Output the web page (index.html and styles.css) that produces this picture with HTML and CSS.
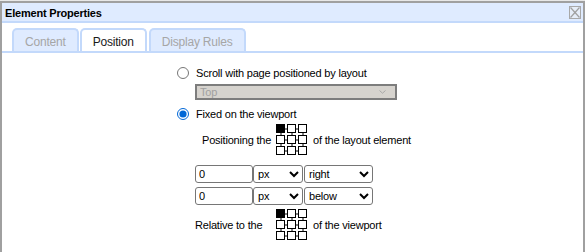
FILE: index.html
```html
<!DOCTYPE html>
<html lang="en">
<head>
    <meta charset="UTF-8">
    <meta name="viewport" content="width=device-width, initial-scale=1.0">
    <title>Element Properties</title>
    <link rel="stylesheet" href="styles.css">
</head>
<body>
    <div class="backdrop"></div>
    <div class="dialog">
        <div class="titlebar">
            <span class="title">Element Properties</span>
            <span class="close-btn">
                <svg width="10" height="11" viewBox="0 0 10 11">
                    <line x1="0.5" y1="0.5" x2="9.5" y2="10.5" stroke="#a0a0a0" stroke-width="1.2"/>
                    <line x1="9.5" y1="0.5" x2="0.5" y2="10.5" stroke="#a0a0a0" stroke-width="1.2"/>
                </svg>
            </span>
        </div>

        <div class="tabs">
            <div class="tab">Content</div>
            <div class="tab active">Position</div>
            <div class="tab">Display Rules</div>
        </div>

        <div class="panel">
            <label class="radio-row">
                <input type="radio" name="mode">
                <span>Scroll with page positioned by layout</span>
            </label>
            <div class="indent">
                <div class="layout-select">
                    <span>Top</span>
                    <svg width="7" height="4" viewBox="0 0 7 4">
                        <polyline points="0.5,0.5 3.5,3.2 6.5,0.5" fill="none" stroke="#a8a8a8" stroke-width="1"/>
                    </svg>
                </div>
            </div>
            <label class="radio-row">
                <input type="radio" name="mode" checked>
                <span>Fixed on the viewport</span>
            </label>

            <div class="indent anchor-row first">
                <span class="anchor-label">Positioning the</span>
                <svg class="grid" width="32" height="32" viewBox="0 0 32 32">
                    <g stroke="#000" stroke-width="1" fill="#fff">
                        <line x1="9" y1="5" x2="23" y2="5"/>
                        <line x1="9" y1="16" x2="23" y2="16"/>
                        <line x1="9" y1="27" x2="23" y2="27"/>
                        <line x1="5" y1="9" x2="5" y2="23"/>
                        <line x1="16" y1="9" x2="16" y2="23"/>
                        <line x1="27" y1="9" x2="27" y2="23"/>
                        <rect x="0.5" y="0.5" width="8" height="8" fill="#000"/>
                        <rect x="11.5" y="0.5" width="8" height="8"/>
                        <rect x="22.5" y="0.5" width="8" height="8"/>
                        <rect x="0.5" y="11.5" width="8" height="8"/>
                        <rect x="11.5" y="11.5" width="8" height="8"/>
                        <rect x="22.5" y="11.5" width="8" height="8"/>
                        <rect x="0.5" y="22.5" width="8" height="8"/>
                        <rect x="11.5" y="22.5" width="8" height="8"/>
                        <rect x="22.5" y="22.5" width="8" height="8"/>
                    </g>
                </svg>
                <span>of the layout element</span>
            </div>

            <div class="indent offset-row first">
                <input type="text" class="num" value="0">
                <select class="unit"><option>px</option></select>
                <select class="dir"><option>right</option></select>
            </div>
            <div class="indent offset-row">
                <input type="text" class="num" value="0">
                <select class="unit"><option>px</option></select>
                <select class="dir"><option>below</option></select>
            </div>

            <div class="indent anchor-row">
                <span class="anchor-label">Relative to the</span>
                <svg class="grid" width="32" height="32" viewBox="0 0 32 32">
                    <g stroke="#000" stroke-width="1" fill="#fff">
                        <line x1="9" y1="5" x2="23" y2="5"/>
                        <line x1="9" y1="16" x2="23" y2="16"/>
                        <line x1="9" y1="27" x2="23" y2="27"/>
                        <line x1="5" y1="9" x2="5" y2="23"/>
                        <line x1="16" y1="9" x2="16" y2="23"/>
                        <line x1="27" y1="9" x2="27" y2="23"/>
                        <rect x="0.5" y="0.5" width="8" height="8" fill="#000"/>
                        <rect x="11.5" y="0.5" width="8" height="8"/>
                        <rect x="22.5" y="0.5" width="8" height="8"/>
                        <rect x="0.5" y="11.5" width="8" height="8"/>
                        <rect x="11.5" y="11.5" width="8" height="8"/>
                        <rect x="22.5" y="11.5" width="8" height="8"/>
                        <rect x="0.5" y="22.5" width="8" height="8"/>
                        <rect x="11.5" y="22.5" width="8" height="8"/>
                        <rect x="22.5" y="22.5" width="8" height="8"/>
                    </g>
                </svg>
                <span>of the viewport</span>
            </div>
        </div>
    </div>
</body>
</html>
```

FILE: styles.css
```css
* {
    margin: 0;
    padding: 0;
    box-sizing: border-box;
}

body {
    font-family: 'Liberation Sans', Arial, sans-serif;
    font-size: 11px;
    letter-spacing: -0.2px;
    color: #000;
    background-color: #fff;
    width: 585px;
    height: 252px;
    overflow: hidden;
}

.backdrop {
    height: 1px;
    background-color: #e8e8e8;
}

.dialog {
    border: 2px solid #a0a0a0;
    border-bottom: none;
    height: 251px;
    background-color: #fff;
}

.titlebar {
    height: 17px;
    background-color: #dfebff;
    border-bottom: 2px solid #c3d9fb;
    display: flex;
    justify-content: space-between;
    align-items: center;
    padding: 1px 2px 0 3px;
    box-sizing: content-box;
}

.title {
    font-weight: bold;
    font-size: 11px;
}

.close-btn {
    width: 12px;
    height: 13px;
    border: 1px solid #a8a8a8;
    background-color: #e6edf8;
    display: flex;
    align-items: center;
    justify-content: center;
}

.tabs {
    display: flex;
    align-items: flex-end;
    gap: 1px;
    height: 28px;
    padding-left: 10px;
    border-bottom: 2px solid #c3d9fb;
    box-sizing: content-box;
}

.tab {
    height: 23px;
    padding: 5px 11px 0;
    line-height: 14px;
    border: 2px solid #c3d9fb;
    border-bottom: none;
    border-radius: 5px 5px 0 0;
    background-color: #dfebff;
    color: #a6a6a6;
    font-size: 12px;
}

.tab.active {
    background-color: #fff;
    color: #1a1a1a;
    margin-right: 1px;
}

.panel {
    padding: 13px 0 0 175px;
}

.radio-row {
    display: flex;
    align-items: center;
    gap: 7px;
    height: 13px;
}

.radio-row input {
    width: 12px;
    height: 12px;
    margin: 0;
    accent-color: #0067d6;
}

.indent {
    margin-left: 18px;
}

.layout-select {
    display: flex;
    justify-content: space-between;
    align-items: center;
    width: 202px;
    height: 16px;
    margin: 5px 0 7px;
    padding: 0 9px 0 3px;
    line-height: 12px;
    color: #a0a0a0;
    background-color: #d6d3ce;
    border: 2px solid #7d7d7d;
}

.anchor-row {
    display: flex;
    align-items: center;
    margin-top: 4px;
}

.anchor-label {
    width: 81px;
}

.anchor-row.first .anchor-label {
    padding-left: 7px;
}

.grid {
    display: block;
    margin-right: 5px;
}

.offset-row {
    display: flex;
    margin-bottom: 4px;
}

.offset-row.first {
    margin-top: 9px;
}

.num,
.unit,
.dir {
    height: 18px;
    font-family: inherit;
    font-size: 11px;
    letter-spacing: -0.2px;
    color: #000;
    border: 1px solid #767676;
    border-radius: 3px;
    background-color: #fff;
}

.num {
    width: 58px;
    padding-left: 3px;
}

.unit {
    width: 50px;
    margin-right: 1px;
}

.dir {
    width: 69px;
}
```
